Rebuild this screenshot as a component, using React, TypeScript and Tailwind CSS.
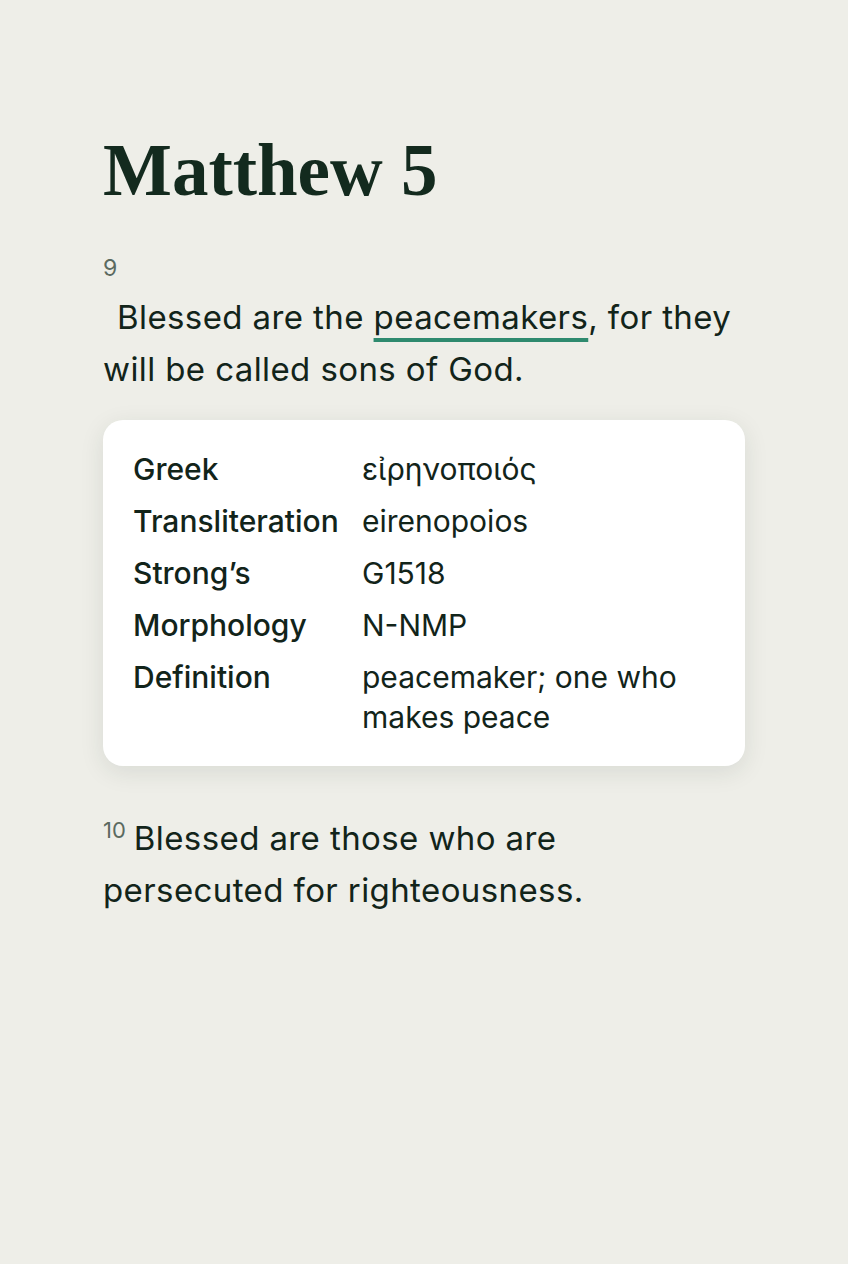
const WORD_DETAILS = [
  { label: "Greek", value: "εἰρηνοποιός" },
  { label: "Transliteration", value: "eirenopoios" },
  { label: "Strong\u2019s", value: "G1518" },
  { label: "Morphology", value: "N-NMP" },
  { label: "Definition", value: "peacemaker; one who makes peace" },
];

export default function App() {
  return (
    <div className="min-h-screen bg-[#eeeee8] text-[#12241a] font-['Inter','Liberation_Sans',sans-serif]">
      <div className="px-[103px] pt-[135px] pb-16">
        {/* Chapter title */}
        <h1 className="font-['Liberation_Serif','Times_New_Roman',serif] text-[73px] font-bold leading-[72px] text-[#132a1e]">
          Matthew 5
        </h1>

        {/* Verse 9 */}
        <div className="mt-[47px]">
          <div className="text-[23px] leading-[28px] text-[#5b6a60]">9</div>
          <p className="mt-[9px] text-[33px] leading-[52px] indent-[14px] tracking-[0.4px]">
            Blessed are the{" "}
            <span className="underline decoration-[#2e8a6e] decoration-[4px] underline-offset-[9px]">
              peacemakers
            </span>
            , for they will be called sons of God.
          </p>
        </div>

        {/* Word study card */}
        <div className="mt-[25px] rounded-[20px] bg-white px-[30px] py-[29px] shadow-[0_6px_24px_rgba(30,45,35,0.10)]">
          <div className="grid grid-cols-[229px_1fr] gap-y-[12px] text-[30px] leading-[40px]">
            {WORD_DETAILS.map(({ label, value }) => (
              <div key={label} className="contents">
                <div className="font-medium">{label}</div>
                <div className="max-w-[330px]">{value}</div>
              </div>
            ))}
          </div>
        </div>

        {/* Verse 10 */}
        <p className="mt-[46px] text-[33px] leading-[52px] tracking-[0.4px] pr-16">
          <sup className="text-[22px] text-[#5b6a60] mr-[8px] top-[-12px] tracking-normal">10</sup>
          Blessed are those who are persecuted for righteousness.
        </p>
      </div>
    </div>
  );
}
